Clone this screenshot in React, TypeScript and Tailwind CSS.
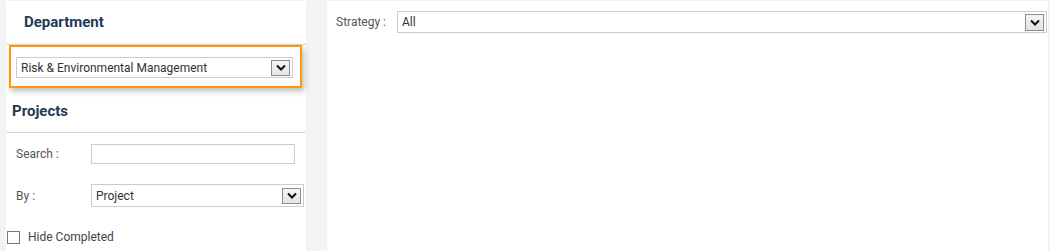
import React from "react";

const FONT = "font-['Roboto','Liberation_Sans',sans-serif]";

// old-school select arrow button
function ArrowButton({ className = "" }: { className?: string }) {
  return (
    <div
      className={`flex items-center justify-center border border-[#8c8c8c] bg-gradient-to-b from-[#f6f6f6] to-[#e3e3e3] ${className}`}
    >
      <svg width="10" height="7" viewBox="0 0 10 7" fill="none">
        <path d="M1 1.5 L5 5.5 L9 1.5" stroke="#111" strokeWidth="2" />
      </svg>
    </div>
  );
}

function SelectBox({
  value,
  className = "",
  buttonClass = "",
}: {
  value: string;
  className?: string;
  buttonClass?: string;
}) {
  return (
    <div
      className={`flex items-center justify-between border border-[#c7cdd5] bg-white pl-[4px] pr-[2px] ${className}`}
    >
      <span className="text-[12px] text-[#333]">{value}</span>
      <ArrowButton className={buttonClass} />
    </div>
  );
}

export default function App() {
  return (
    <div className={`w-[1050px] h-[251px] bg-[#f3f3f3] pt-px flex ${FONT}`}>
      {/* ── Left panel ─────────────────────────── */}
      <div className="ml-[6px] w-[300px] bg-white flex flex-col">
        <div className="h-[44px] flex items-center pl-[18px] border-b border-[#d3d7dc]">
          <h2 className="text-[15px] font-bold text-[#1e3a57]">Department</h2>
        </div>

        <div className="ml-[3px] w-[293px] h-[43px] border-2 border-[#ff9b00] shadow-[2px_3px_6px_rgba(0,0,0,0.28)] pl-[5px] pt-[10px]">
          <SelectBox
            value="Risk & Environmental Management"
            className="w-[277px] h-[21px]"
            buttonClass="w-[19px] h-[16px]"
          />
        </div>

        <div className="h-[45px] flex items-center pt-[2px] pl-[6px] border-b border-[#d3d7dc]">
          <h2 className="text-[15px] font-bold text-[#1e3a57]">Projects</h2>
        </div>

        <div className="flex items-center mt-[11px] pl-[10px]">
          <span className="w-[75px] text-[12px] text-[#555]">Search :</span>
          <input className="w-[204px] h-[20px] border border-[#c7cdd5] outline-none" />
        </div>

        <div className="flex items-center mt-[20px] pl-[10px]">
          <span className="w-[75px] text-[12px] text-[#555]">By :</span>
          <SelectBox
            value="Project"
            className="w-[213px] h-[23px]"
            buttonClass="w-[19px] h-[16px]"
          />
        </div>

        <label className="flex items-center gap-[8px] mt-[21px] ml-px">
          <span className="w-[13px] h-[13px] border border-[#777] bg-white" />
          <span className="text-[12px] text-[#444]">Hide Completed</span>
        </label>
      </div>

      {/* ── Right panel ────────────────────────── */}
      <div className="ml-[21px] w-[721px] bg-white pt-[10px] pl-[9px]">
        <div className="flex items-center">
          <span className="w-[61px] text-[12px] text-[#555]">Strategy :</span>
          <SelectBox
            value="All"
            className="w-[650px] h-[22px]"
            buttonClass="w-[19px] h-[17px]"
          />
        </div>
      </div>
    </div>
  );
}
